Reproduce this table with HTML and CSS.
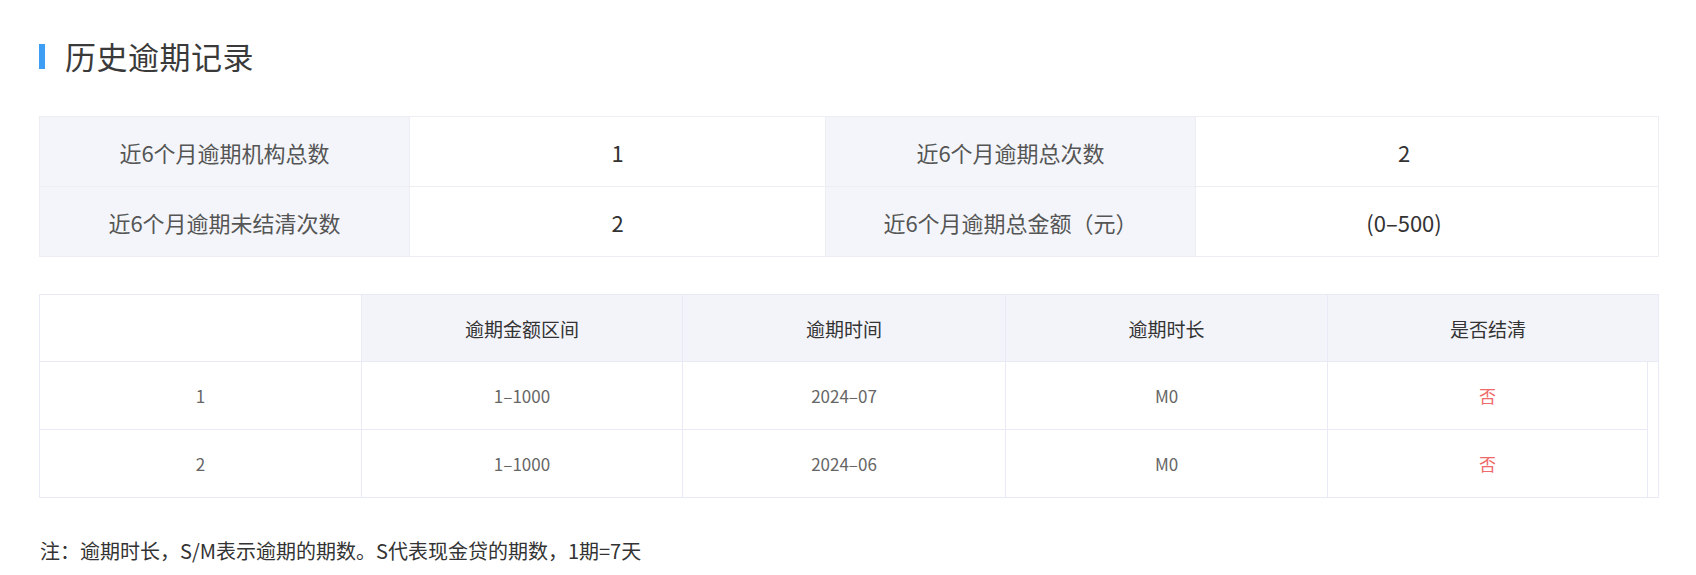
FILE: index.html
```html
<!DOCTYPE html>
<html lang="zh-CN">
<head>
<meta charset="utf-8">
<title>历史逾期记录</title>
<link rel="stylesheet" href="styles.css">
</head>
<body>
<div class="page">
  <h2 class="title"><span class="title-bar"></span><span class="title-text">历史逾期记录</span></h2>

  <div class="summary">
    <div class="cell label">近6个月逾期机构总数</div>
    <div class="cell value">1</div>
    <div class="cell label">近6个月逾期总次数</div>
    <div class="cell value last">2</div>
    <div class="cell label bottom">近6个月逾期未结清次数</div>
    <div class="cell value bottom">2</div>
    <div class="cell label bottom">近6个月逾期总金额（元）</div>
    <div class="cell value last bottom">(0–500)</div>
  </div>

  <div class="records">
    <div class="head blank"></div>
    <div class="head">逾期金额区间</div>
    <div class="head">逾期时间</div>
    <div class="head">逾期时长</div>
    <div class="head nb">是否结清</div>
    <div class="head gutter"></div>

    <div class="td">1</div>
    <div class="td">1–1000</div>
    <div class="td">2024–07</div>
    <div class="td">M0</div>
    <div class="td red">否</div>
    <div class="td gutter-b"></div>

    <div class="td lastrow">2</div>
    <div class="td lastrow">1–1000</div>
    <div class="td lastrow">2024–06</div>
    <div class="td lastrow">M0</div>
    <div class="td lastrow red">否</div>
    <div class="td gutter-b lastrow"></div>
  </div>

  <p class="note">注：逾期时长，S/M表示逾期的期数。S代表现金贷的期数，1期=7天</p>
</div>
</body>
</html>
```

FILE: styles.css
```css
* { box-sizing: border-box; }
html, body { margin: 0; padding: 0; background: #ffffff; }
body {
  font-family: "Noto Sans CJK SC", "Noto Sans", "Liberation Sans", sans-serif;
  color: #333333;
}
.page {
  padding: 40px 37px 0 39px;
}
.title {
  display: flex;
  align-items: center;
  margin: 0;
  height: 32px;
  font-weight: normal;
}
.title-bar {
  width: 6px;
  height: 25px;
  background: #3d9ef3;
  margin-right: 20px;
}
.title-text {
  font-size: 31px;
  line-height: 32px;
  color: #3a3a3a;
  letter-spacing: 0.5px;
}

.summary {
  margin-top: 44px;
  display: grid;
  grid-template-columns: 370px 416px 370px 1fr;
  border: 1px solid #eceef4;
}
.summary .cell {
  height: 70px;
  display: flex;
  align-items: center;
  justify-content: center;
  font-size: 22px;
  border-right: 1px solid #eceef4;
  border-bottom: 1px solid #eceef4;
}
.summary .cell.last { border-right: none; padding-right: 46px; }
.summary .cell.bottom { border-bottom: none; height: 69px; }
.summary .label { background: #f4f5fa; color: #555555; }
.summary .value { background: #ffffff; color: #333333; }

.records {
  margin-top: 37px;
  display: grid;
  grid-template-columns: 322px 321px 323px 322px 320px 1fr;
  border: 1px solid #e8ebf5;
}
.records .head {
  height: 67px;
  display: flex;
  align-items: center;
  justify-content: center;
  background: #f3f4fa;
  font-size: 19px;
  color: #333333;
  border-right: 1px solid #e8ebf5;
  border-bottom: 1px solid #e8ebf5;
}
.records .head.blank { background: #ffffff; }
.records .head.nb { border-right: none; }
.records .head.gutter { border-right: none; }
.records .td {
  height: 68px;
  display: flex;
  align-items: center;
  justify-content: center;
  font-size: 17px;
  color: #666666;
  border-right: 1px solid #e8ebf5;
  border-bottom: 1px solid #e8ebf5;
}
.records .td.lastrow { border-bottom: none; height: 67px; }
.records .td.red { color: #ef6b6b; }
.records .td.gutter-b { border-right: none; border-bottom: none; }

.note {
  margin: 39px 0 0 1px;
  font-size: 20px;
  line-height: 28px;
  color: #333333;
}
```
